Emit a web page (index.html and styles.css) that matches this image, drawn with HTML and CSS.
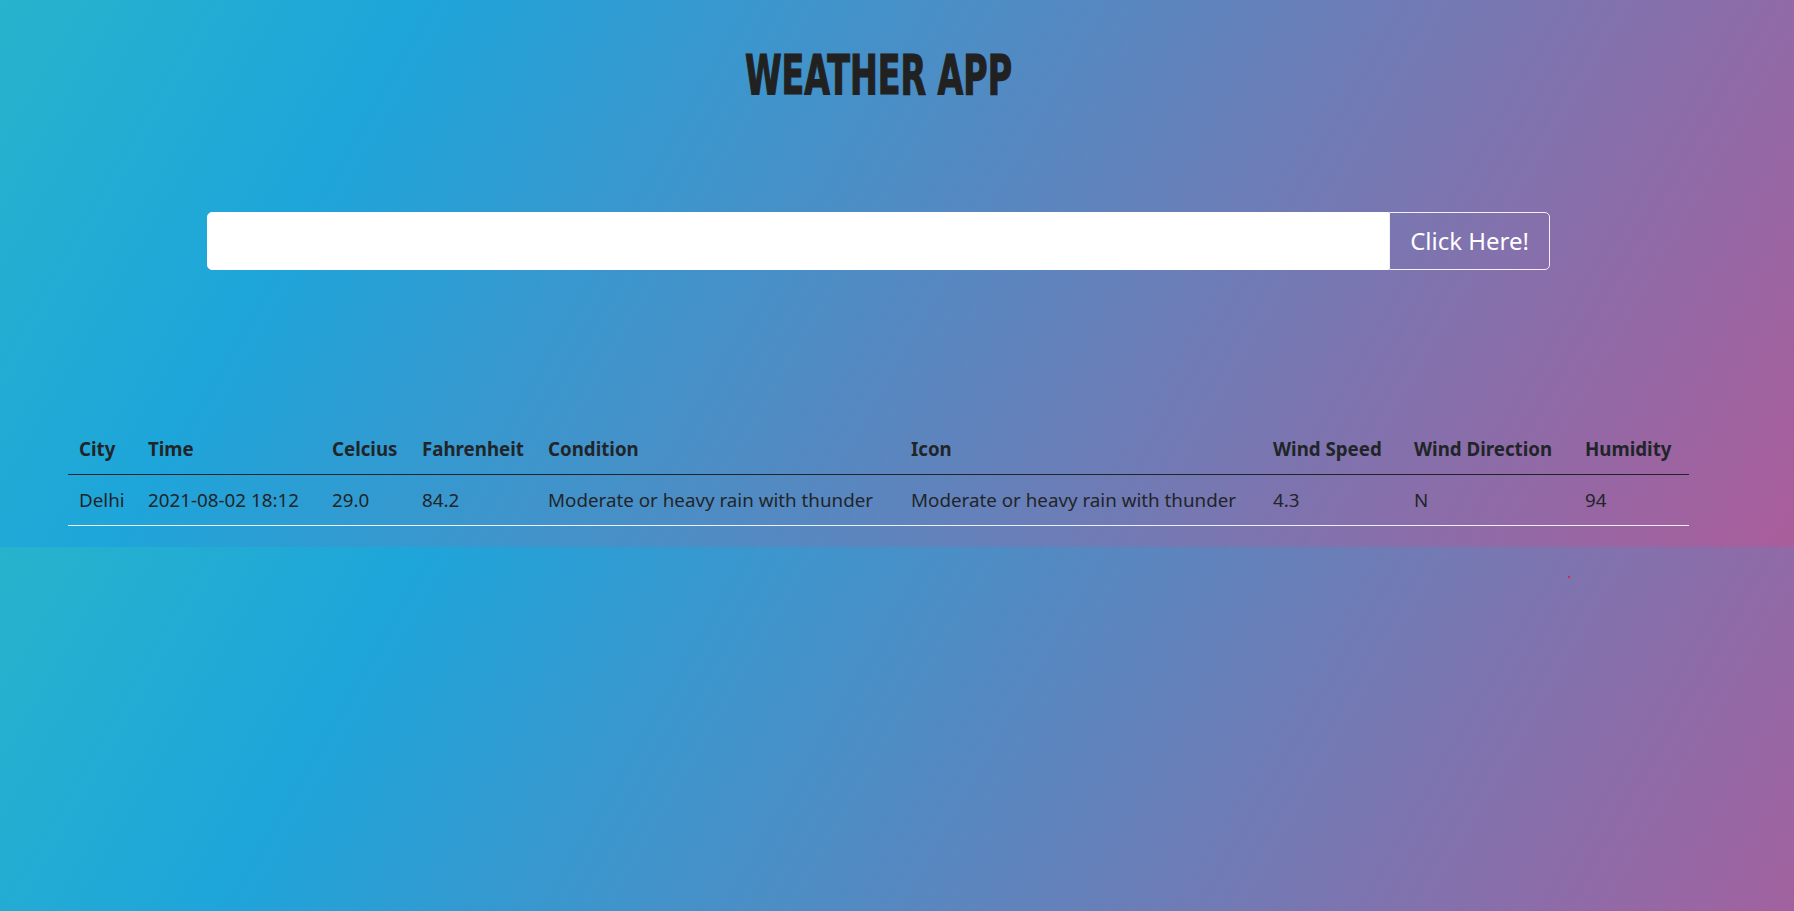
FILE: index.html
```html
<!DOCTYPE html>
<html lang="en">
<head>
<meta charset="utf-8">
<title>Weather App</title>
<link rel="stylesheet" href="styles.css">
</head>
<body>
<div class="page">
  <header class="title-wrap"><h1 class="title">WEATHER APP</h1></header>
  <form class="search">
    <input class="search-input" type="text" aria-label="City">
    <button class="search-btn" type="button">Click Here!</button>
  </form>
  <table class="weather">
    <colgroup>
      <col class="c-city"><col class="c-time"><col class="c-cel"><col class="c-fah"><col class="c-cond"><col class="c-icon"><col class="c-ws"><col class="c-wd"><col class="c-hum">
    </colgroup>
    <thead>
      <tr><th>City</th><th>Time</th><th>Celcius</th><th>Fahrenheit</th><th>Condition</th><th>Icon</th><th>Wind Speed</th><th>Wind Direction</th><th>Humidity</th></tr>
    </thead>
    <tbody>
      <tr><td>Delhi</td><td>2021-08-02 18:12</td><td>29.0</td><td>84.2</td><td>Moderate or heavy rain with thunder</td><td>Moderate or heavy rain with thunder</td><td>4.3</td><td>N</td><td>94</td></tr>
    </tbody>
  </table>
</div>
<span class="dot"></span>
</body>
</html>
```

FILE: styles.css
```css
body {
  margin: 0;
  font-family: "Segoe UI", "Noto Sans", sans-serif;
  color: #212529;
  background: linear-gradient(120deg, #27b3cc 0%, #1ea5da 20%, #aa5d9b 100%);
}

.page {
  width: 1757px;
  padding-top: 47px;
  padding-bottom: 21px;
}

.title-wrap {
  display: block;
}

.title {
  margin: 0;
  padding-top: 1px;
  text-align: center;
  font-family: "DejaVu Sans Condensed", "DejaVu Sans", sans-serif;
  font-weight: bold;
  font-size: 55px;
  line-height: 55px;
  color: #212121;
  -webkit-text-stroke: 1.2px #212121;
  transform: scaleX(0.672);
}

.search {
  display: flex;
  width: 1343px;
  height: 58px;
  margin: 109px auto 0;
}

.search-input {
  flex: 1;
  margin: 0;
  border: 1px solid #ffffff;
  border-radius: 5px 0 0 5px;
  background: #ffffff;
  font: inherit;
  font-size: 20px;
  padding: 0 16px;
  outline: none;
}

.search-btn {
  margin: 0;
  padding: 0 20px;
  border: 1px solid #f4f0fa;
  border-radius: 0 5px 5px 0;
  background: transparent;
  color: #ffffff;
  font-family: inherit;
  font-size: 24px;
  line-height: 36px;
  cursor: pointer;
}

.weather {
  width: 1621px;
  margin: 154px auto 0;
  border-collapse: collapse;
  table-layout: fixed;
  font-size: 18.8px;
  line-height: 30px;
}

.c-city { width: 69px; }
.c-time { width: 184px; }
.c-cel { width: 90px; }
.c-fah { width: 126px; }
.c-cond { width: 363px; }
.c-icon { width: 362px; }
.c-ws { width: 141px; }
.c-wd { width: 171px; }
.c-hum { width: 115px; }

.weather th,
.weather td {
  padding: 10px 10px 10px 11px;
  text-align: left;
  white-space: nowrap;
  vertical-align: top;
}

.weather th {
  font-weight: bold;
  font-size: 18.7px;
  border-bottom: 1px solid #212529;
}

.weather td {
  font-weight: normal;
  border-bottom: 1px solid #eef0f8;
}

.dot {
  position: absolute;
  left: 1568px;
  top: 576px;
  width: 2px;
  height: 2px;
  background: #c0305e;
}
```
